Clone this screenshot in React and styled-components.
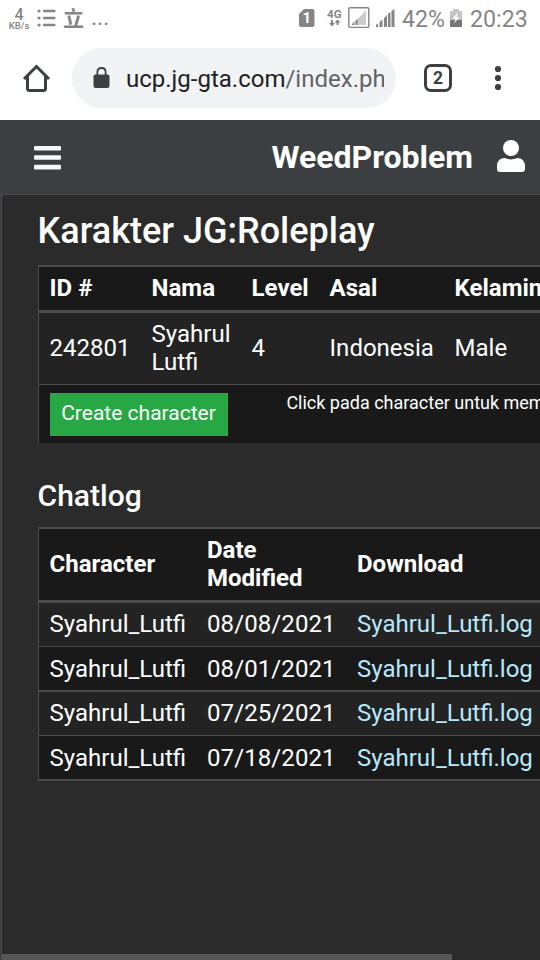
import styled, { createGlobalStyle, css } from 'styled-components';

const GlobalStyle = createGlobalStyle`
    * {
        box-sizing: border-box;
    }

    body {
        margin: 0;
        background: #2b2b2b;
        font-family: Roboto, "Noto Sans CJK SC", sans-serif;
        overflow: hidden;
    }
`;

const Screen = styled.div`
    display: flex;
    flex-direction: column;
    width: 540px;
    height: 960px;
    overflow: hidden;
    color: #fff;
    background: #2b2b2b;
`;

const StatusBar = styled.div`
    display: flex;
    align-items: center;
    flex: none;
    height: 36px;
    padding: 0 12px 0 8px;
    color: #858585;
    background: #fff;
`;

const Speed = styled.div`
    display: flex;
    flex-direction: column;
    align-items: center;
    width: 22px;
    margin-right: 7px;
    padding-top: 2px;
    font-size: 9.5px;
    line-height: 9px;
    font-weight: 500;

    b {
        font-size: 16px;
        line-height: 13px;
        font-weight: 500;
    }
`;

const Notification = styled.span`
    width: 22px;
    margin-left: 7px;
    padding-bottom: 3px;
    font: 700 21px/30px "Noto Sans CJK SC", sans-serif;
`;

const Dots = styled.span`
    margin-left: 6px;
    font-size: 23px;
    line-height: 30px;
`;

const Spacer = styled.div`
    flex: 1;
`;

const Icon = styled.svg`
    flex: none;
    display: block;
`;

const StatusIcons = styled.div`
    display: flex;
    align-items: center;
    gap: 4px;
    margin-left: 12px;
`;

const StatusText = styled.span`
    width: ${({ $width }) => $width}px;
    margin-left: ${({ $left }) => $left}px;
    padding-top: 2px;
    font-size: 23.2px;
    line-height: 34px;
    white-space: nowrap;
`;

const Battery = styled(Icon)`
    margin-left: 6px;
`;

const BrowserBar = styled.div`
    display: flex;
    align-items: center;
    flex: none;
    height: 84px;
    padding-left: 21px;
    background: #fff;
`;

const Address = styled.div`
    display: flex;
    align-items: center;
    width: 324px;
    height: 60px;
    margin: 0 28px 0 21px;
    padding: 0 12px 0 21px;
    border-radius: 30px;
    background: #f1f3f4;
`;

const Url = styled.div`
    flex: 1;
    margin-left: 16px;
    padding-top: 2px;
    overflow: hidden;
    font-size: 24px;
    line-height: 36px;
    white-space: nowrap;
    color: #202124;

    span {
        color: #5f6368;
    }
`;

const TabCount = styled.div`
    width: 28px;
    height: 28px;
    margin-right: 42px;
    border: 3px solid #3c4043;
    border-radius: 7px;
    color: #3c4043;
    font-size: 17.5px;
    font-weight: 700;
    line-height: 22px;
    text-align: center;
`;

const Header = styled.header`
    display: flex;
    align-items: center;
    flex: none;
    height: 75px;
    padding: 0 15px 0 34px;
    border-bottom: 1px solid #4b4b4b;
    background: #3c3f41;
`;

const User = styled.div`
    margin-right: 24px;
    font-size: 32px;
    font-weight: 700;
    line-height: 40px;
`;

const Content = styled.main`
    flex: 1;
    min-height: 0;
    margin-left: 1px;
    padding-left: 36px;
    border-left: 1px solid #4b4b4b;
    box-shadow: -1px 0 0 #3c3f41;
    overflow: hidden;
`;

const Title = styled.h1`
    height: 70px;
    margin: 0 0 0 -0.4px;
    font-size: 36px;
    font-weight: 500;
    line-height: 72px;
    white-space: nowrap;
`;

const Subtitle = styled.h2`
    height: 84px;
    margin: 0 0 0 -0.4px;
    font-size: 30px;
    font-weight: 500;
    line-height: 106px;
`;

const Table = styled.div`
    width: 640px;
    border-left: 1px solid #4b4b4b;
    border-top: 2px solid #4b4b4b;
    font-size: 24px;
    line-height: 28px;
`;

const Row = styled.div`
    display: grid;
    grid-template-columns: ${({ $columns }) => $columns};
    align-items: center;
    height: ${({ $height }) => $height}px;
    padding-bottom: ${({ $head, $dark }) => ($head || !$dark ? 2 : 0)}px;
    border-bottom: ${({ $line = 1 }) => $line}px solid #4b4b4b;
    background: ${({ $dark }) => ($dark ? '#191919' : '#232323')};
    ${({ $head }) => $head && css`
        font-weight: 700;
    `}
`;

const Cell = styled.div`
    padding-left: 10.6px;
`;

const DateCell = styled(Cell)`
    letter-spacing: 0.1px;
`;

const Link = styled.a`
    color: #b8e8fc;
`;

const TableFooter = styled.div`
    display: flex;
    align-items: flex-start;
    height: 58px;
    padding: 8px 0 0 11px;
    background: #191919;
`;

const CreateButton = styled.button`
    width: 178px;
    height: 43px;
    padding: 0 1px 2px 0;
    border: 0;
    color: #fff;
    background: #28a745;
    font: 400 21px/39px Roboto, sans-serif;
    white-space: nowrap;
`;

const Hint = styled.span`
    margin-left: 58.4px;
    font-size: 18px;
    line-height: 20px;
    white-space: nowrap;
`;

const ScrollBar = styled.div`
    position: absolute;
    left: 2px;
    top: 954px;
    width: 450px;
    height: 6px;
    background: #565656;
`;

const characterColumns = '102px 100px 78px 125px 1fr';
const logColumns = '157.4px 150px 1fr';

const logs = [
    { date: '08/08/2021', height: 44, line: 1 },
    { date: '08/01/2021', height: 45, line: 2 },
    { date: '07/25/2021', height: 44, line: 1 },
    { date: '07/18/2021', height: 45, line: 2 },
];

const ListIcon = () => (
    <Icon width="19" height="18" viewBox="0 0 19 18" fill="currentColor">
        {[1, 8, 15].map((y) => (
            <g key={y}>
                <circle cx="2" cy={y + 1} r="1.6" />
                <rect x="6" y={y - 0.3} width="12.5" height="2.6" rx="1" />
            </g>
        ))}
    </Icon>
);

const SimIcon = () => (
    <Icon width="16" height="18" viewBox="0 0 16 18">
        <path d="M5 0h8.5q2 0 2 2v14q0 2-2 2H2q-2 0-2-2V5z" fill="#858585" />
        <text x="7.7" y="14.2" textAnchor="middle" fill="#fff" fontSize="15" fontWeight="700">1</text>
    </Icon>
);

const DataIcon = () => (
    <Icon width="17" height="20" viewBox="0 0 17 20" fill="#858585">
        <text x="0" y="9.6" fontSize="11" fontWeight="700" textLength="14.5" lengthAdjust="spacingAndGlyphs">4G</text>
        <path d="M4 12v3H2l3 3.4 3-3.4H6v-3zM9.5 17v-2.5h-2l3-3 3 3h-2V17z" />
    </Icon>
);

const SignalIcons = () => (
    <Icon width="49" height="22" viewBox="0 0 49 22">
        <rect x="0.8" y="0.8" width="20" height="19.6" rx="1" fill="none" stroke="#858585" strokeWidth="1.4" />
        <path d="M3.5 18L18 3.5V18z" fill="#ccc" />
        <path d="M4 18v-1l2-2v3zM7.5 18v-4l2-2v6z" fill="#858585" />
        <path d="M28 20v-2l2-1.5V20zM31.5 20v-5l3-2.5V20zM36 20v-9l3-3v12zM40 20V7l2.5-2v15zM43.5 20V4l3-2v18z" fill="#858585" />
    </Icon>
);

const BatteryIcon = () => (
    <Battery width="12" height="18" viewBox="0 0 12 18">
        <path d="M0 2h3V0h6v2h3v9H0z" fill="#c4c4c4" />
        <path d="M0 11h12v7H0z" fill="#777" />
        <path d="M8.2 3L2.5 9.5h3.2L4 14.5l5.8-6.4H6.4z" fill="#fff" />
    </Battery>
);

const HomeIcon = () => (
    <Icon width="30" height="30" viewBox="0 0 30 30" fill="none" stroke="#3c4043" strokeWidth="3">
        <path d="M3 16L15.5 3.5 28 16M6.5 13v12.5q0 2 2 2h14q2 0 2-2V13" />
    </Icon>
);

const LockIcon = () => (
    <Icon width="17" height="22" viewBox="0 0 17 22">
        <rect x="0.5" y="7.5" width="16" height="13.5" rx="2" fill="#3c4043" />
        <path d="M4.4 8V5q0-4 4.1-4t4.1 4v3" fill="none" stroke="#3c4043" strokeWidth="1.8" />
    </Icon>
);

const MoreIcon = () => (
    <Icon width="8" height="26" viewBox="0 0 8 26" fill="#3c4043">
        <circle cx="4" cy="4" r="3.1" />
        <circle cx="4" cy="13" r="3.1" />
        <circle cx="4" cy="22" r="3.1" />
    </Icon>
);

const MenuIcon = () => (
    <Icon width="27" height="26" viewBox="0 0 27 26" fill="#f5f7f9">
        <rect y="2" width="27" height="4.5" rx="1" />
        <rect y="11.3" width="27" height="4.5" rx="1" />
        <rect y="20.8" width="27" height="4.7" rx="1" />
    </Icon>
);

const UserIcon = () => (
    <Icon width="28" height="34" viewBox="0 0 28 34" fill="#fff">
        <circle cx="14" cy="8" r="8" />
        <path d="M8 18c2 1 4 1.4 6 1.4s4-.4 6-1.4c5 0 8 3.3 8 8v3q0 3-3 3H3q-3 0-3-3v-3c0-4.7 3-8 8-8z" />
    </Icon>
);

const App = () => {
    return (
        <Screen>
            <GlobalStyle />
            <StatusBar>
                <Speed><b>4</b>KB/s</Speed>
                <ListIcon />
                <Notification>立</Notification>
                <Dots>...</Dots>
                <Spacer />
                <SimIcon />
                <StatusIcons>
                    <DataIcon />
                    <SignalIcons />
                </StatusIcons>
                <StatusText $left={5} $width={42}>42%</StatusText>
                <BatteryIcon />
                <StatusText $left={8} $width={58}>20:23</StatusText>
            </StatusBar>
            <BrowserBar>
                <HomeIcon />
                <Address>
                    <LockIcon />
                    <Url>ucp.jg-gta.com<span>/index.php</span></Url>
                </Address>
                <TabCount>2</TabCount>
                <MoreIcon />
            </BrowserBar>
            <Header>
                <MenuIcon />
                <Spacer />
                <User>WeedProblem</User>
                <UserIcon />
            </Header>
            <Content>
                <Title>Karakter JG:Roleplay</Title>
                <Table>
                    <Row $columns={characterColumns} $height={46} $line={3} $head $dark>
                        <Cell>ID #</Cell>
                        <Cell>Nama</Cell>
                        <Cell>Level</Cell>
                        <Cell>Asal</Cell>
                        <Cell>Kelamin</Cell>
                    </Row>
                    <Row $columns={characterColumns} $height={72}>
                        <Cell>242801</Cell>
                        <Cell>Syahrul Lutfi</Cell>
                        <Cell>4</Cell>
                        <Cell>Indonesia</Cell>
                        <Cell>Male</Cell>
                    </Row>
                    <TableFooter>
                        <CreateButton>Create character</CreateButton>
                        <Hint>Click pada character untuk memilih</Hint>
                    </TableFooter>
                </Table>
                <Subtitle>Chatlog</Subtitle>
                <Table>
                    <Row $columns={logColumns} $height={74} $line={3} $head $dark>
                        <Cell>Character</Cell>
                        <Cell>Date Modified</Cell>
                        <Cell>Download</Cell>
                    </Row>
                    {logs.map(({ date, height, line }, i) => (
                        <Row key={date} $columns={logColumns} $height={height} $line={line} $dark={i % 2 === 1}>
                            <Cell>Syahrul_Lutfi</Cell>
                            <DateCell>{date}</DateCell>
                            <Cell><Link>Syahrul_Lutfi.log</Link></Cell>
                        </Row>
                    ))}
                </Table>
            </Content>
            <ScrollBar />
        </Screen>
    );
};

export default App;
